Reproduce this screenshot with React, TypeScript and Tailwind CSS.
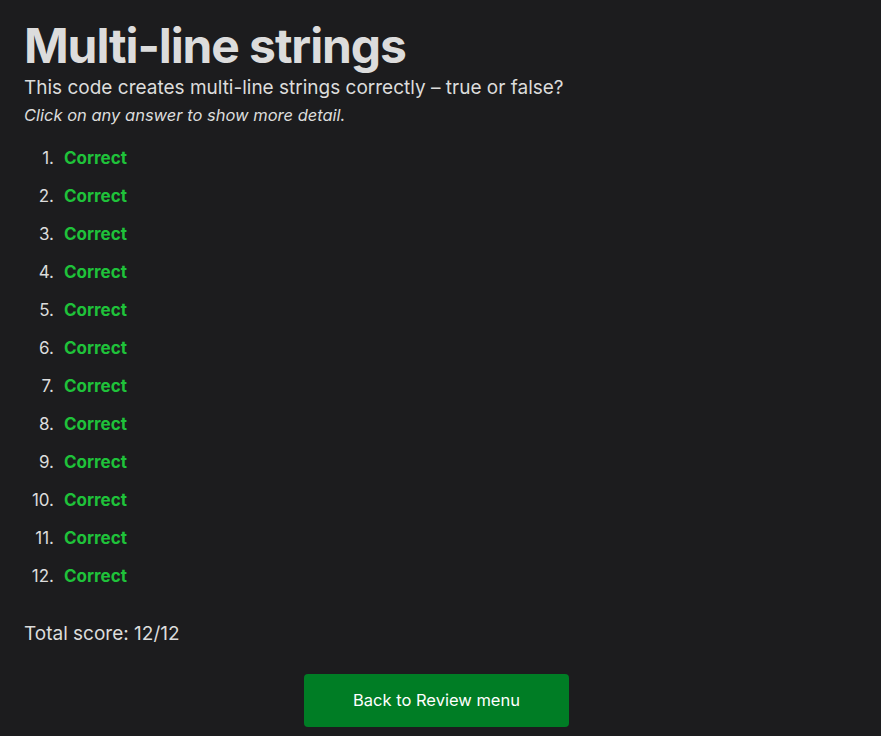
export default function App() {
  const items = Array.from({ length: 12 }, (_, i) => i + 1);
  return (
    <div className="min-h-screen bg-[#1c1c1e] px-6 pt-[17px] pb-2 text-[#dcdcdc] font-['Inter',sans-serif]">
      {/* Heading */}
      <h1 className="text-[48px] font-bold leading-[58px] tracking-[-1.1px]">Multi-line strings</h1>
      <p className="text-[19px] leading-[26px]">
        This code creates multi-line strings correctly – true or false?
      </p>
      <p className="text-[16.5px] italic leading-[24px] mt-[2px]">Click on any answer to show more detail.</p>

      {/* Results */}
      <ol className="mt-[13px] flex flex-col">
        {items.map((n) => (
          <li key={n} className="flex items-center h-[38px] text-[17px]">
            <span className="w-[31px] text-right pr-[1px]">{n}.</span>
            <span className="ml-[9px] font-bold text-[#1fc23a]">Correct</span>
          </li>
        ))}
      </ol>

      <p className="mt-[25px] text-[19px] leading-[26px]">Total score: 12/12</p>

      <div className="flex justify-center mt-[27px] pr-2">
        <button className="w-[265px] h-[53px] rounded-[4px] bg-[#007d25] text-white text-[16.5px]">
          Back to Review menu
        </button>
      </div>
    </div>
  );
}
